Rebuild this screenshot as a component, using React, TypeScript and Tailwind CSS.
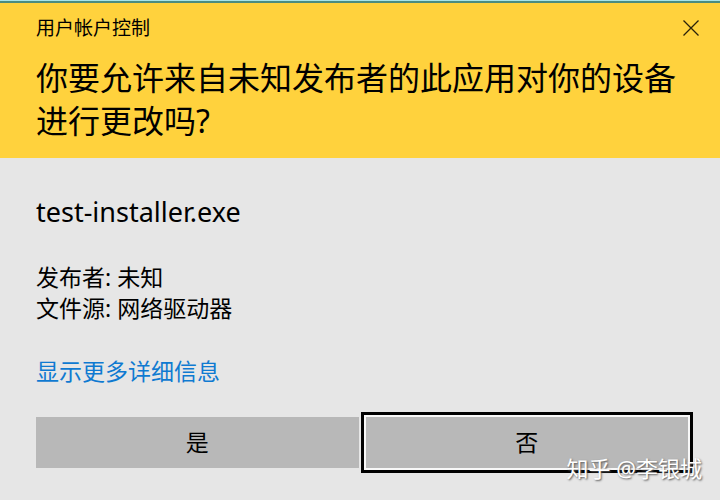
import React from "react";

export default function App() {
  return (
    <main className="relative min-h-screen bg-[#e6e6e6] font-['Noto_Sans','Noto_Sans_CJK_SC',sans-serif] text-black">
      <header className="border-t border-[#a8e4ea] bg-[#ffd23d]">
        <div className="border-t-2 border-[#4b8c80] pt-[9px] pr-[19px] pb-4 pl-9">
          <div className="flex items-center justify-between">
            <span className="text-[19px] leading-8">用户帐户控制</span>
            <button type="button" aria-label="关闭" className="flex size-5 items-center justify-center">
              <svg viewBox="0 0 16 16" className="size-4" fill="none" stroke="#2a210a" strokeWidth="1.3" aria-hidden="true">
                <path d="M0.5 0.5 15.5 15.5M15.5 0.5 0.5 15.5" />
              </svg>
            </button>
          </div>
          <h1 className="mt-3 text-[32px] leading-[43px] font-normal">
            你要允许来自未知发布者的此应用对你的设备进行更改吗?
          </h1>
        </div>
      </header>

      <section className="pt-9 pr-8 pl-9">
        <h2 className="text-[27px] leading-9 font-normal">test-installer.exe</h2>
        <div className="mt-8 text-[23px] leading-[31px]">
          <p>发布者: 未知</p>
          <p>文件源: 网络驱动器</p>
        </div>
        <a href="#details" className="mt-8 block w-fit text-[23px] leading-[31px] text-[#0f7ad1]">
          显示更多详细信息
        </a>
        <div className="mt-[30px] grid grid-cols-2 gap-[7px] text-[23px]">
          <button type="button" className="h-[51px] bg-[#b8b8b8]">是</button>
          <button
            type="button"
            className="h-[51px] bg-[#b8b8b8] ring-2 ring-[#f8f8f8] outline-3 outline-offset-2 outline-black"
          >
            否
          </button>
        </div>
      </section>

      <p className="pointer-events-none absolute right-[18px] bottom-3.5 text-[22px] leading-9 whitespace-nowrap text-white [text-shadow:1px_1px_2px_#555]">
        知乎 @李银城
      </p>
    </main>
  );
}
